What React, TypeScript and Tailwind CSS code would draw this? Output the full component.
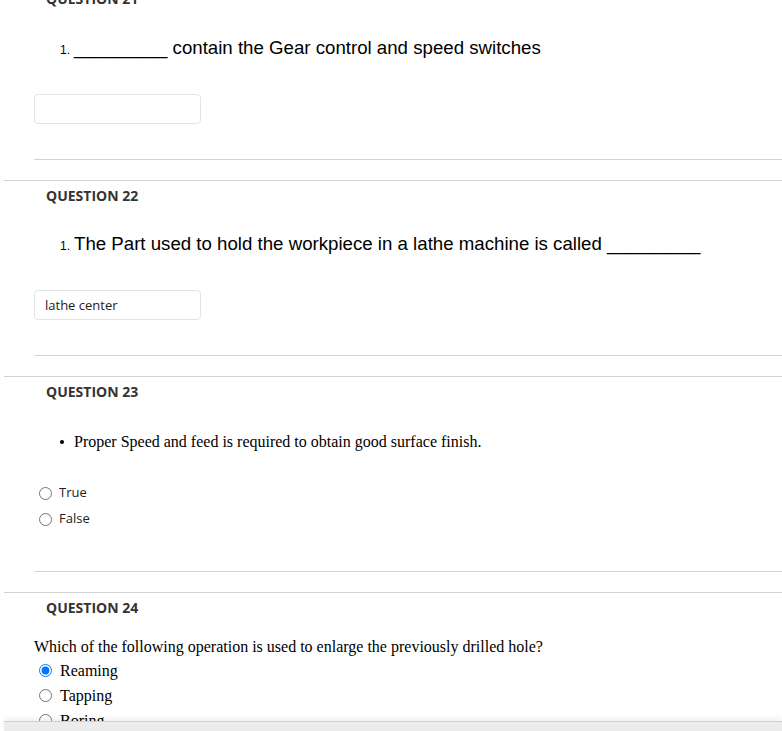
import React from "react";

const arial = "font-['Liberation_Sans',Arial,sans-serif]";
const times = "font-['Liberation_Serif','Times_New_Roman',serif]";
const openSans = "font-['Open_Sans','Noto_Sans',sans-serif]";

const Heading = ({ text, className = "" }: { text: string; className?: string }) => (
    <div className={`pl-[42px] h-[20px] leading-[20px] text-[14px] font-bold text-[#333] ${openSans} ${className}`}>
        {text}
    </div>
);

const Dividers = ({ top }: { top: string }) => (
    <>
        <div className={`ml-[30px] border-t border-[#d2d2d2] ${top}`} />
        <div className="mt-[20px] border-t border-[#d2d2d2]" />
    </>
);

const AnswerBox = ({ value, className = "" }: { value?: string; className?: string }) => (
    <div
        className={`ml-[30px] w-[167px] h-[30px] border border-[#e3e3e3] rounded-[4px] pl-[10px] pt-[1px] flex items-center text-[13px] text-[#222] ${openSans} ${className}`}
    >
        {value}
    </div>
);

const Radio = ({ label, checked, serif }: { label: string; checked?: boolean; serif?: boolean }) => (
    <label className={`flex items-center ${serif ? "h-[25px]" : "h-[26px]"}`}>
        <input type="radio" defaultChecked={checked} className="ml-[5px] mr-[3px] w-[13px] h-[13px]" />
        <span
            className={
                serif
                    ? `ml-[5px] text-[16px] text-black ${times}`
                    : `ml-[4px] text-[13px] text-[#222] ${openSans}`
            }
        >
            {label}
        </span>
    </label>
);

export default function App() {
    return (
        <div className="relative w-full h-[731px] overflow-hidden bg-white">
            <div className="ml-[4px] -mt-[11px]">
                {/* Question 21 */}
                <Heading text="QUESTION 21" />
                <div className={`mt-[27px] pl-[56px] flex items-baseline h-[24px] leading-[24px] text-black ${arial}`}>
                    <span className="text-[12px] w-[14px]">1.</span>
                    <span className="text-[18.67px]">_________ contain the Gear control and speed switches</span>
                </div>
                <AnswerBox className="mt-[34px]" />

                <Dividers top="mt-[35px]" />

                {/* Question 22 */}
                <Heading text="QUESTION 22" className="mt-[5px]" />
                <div className={`mt-[26px] pl-[56px] flex items-baseline h-[24px] leading-[24px] text-black ${arial}`}>
                    <span className="text-[12px] w-[14px]">1.</span>
                    <span className="text-[18.67px]">The Part used to hold the workpiece in a lathe machine is called _________</span>
                </div>
                <AnswerBox value="lathe center" className="mt-[34px]" />

                <Dividers top="mt-[35px]" />

                {/* Question 23 */}
                <Heading text="QUESTION 23" className="mt-[5px]" />
                <div className={`mt-[30px] pl-[56px] flex items-center h-[20px] text-[16px] text-black ${times}`}>
                    <div className="w-[4px] h-[4px] rounded-full bg-black mr-[10px]" />
                    <span>Proper Speed and feed is required to obtain good surface finish.</span>
                </div>
                <div className="mt-[28px] ml-[30px]">
                    <Radio label="True" />
                    <Radio label="False" />
                </div>

                <Dividers top="mt-[39px]" />

                {/* Question 24 */}
                <Heading text="QUESTION 24" className="mt-[5px]" />
                <div className={`mt-[19px] ml-[30px] h-[20px] leading-[20px] text-[16px] text-black ${times}`}>
                    Which of the following operation is used to enlarge the previously drilled hole?
                </div>
                <div className="mt-[1px] ml-[30px]">
                    <Radio label="Reaming" checked serif />
                    <Radio label="Tapping" serif />
                    <Radio label="Boring" serif />
                </div>
            </div>

            {/* bottom bar */}
            <div className="absolute bottom-0 left-[4px] right-0 h-[10px] bg-[#ececec] border-t border-[#cfcfcf] shadow-[0_-3px_5px_rgba(0,0,0,0.06)]" />
        </div>
    );
}
